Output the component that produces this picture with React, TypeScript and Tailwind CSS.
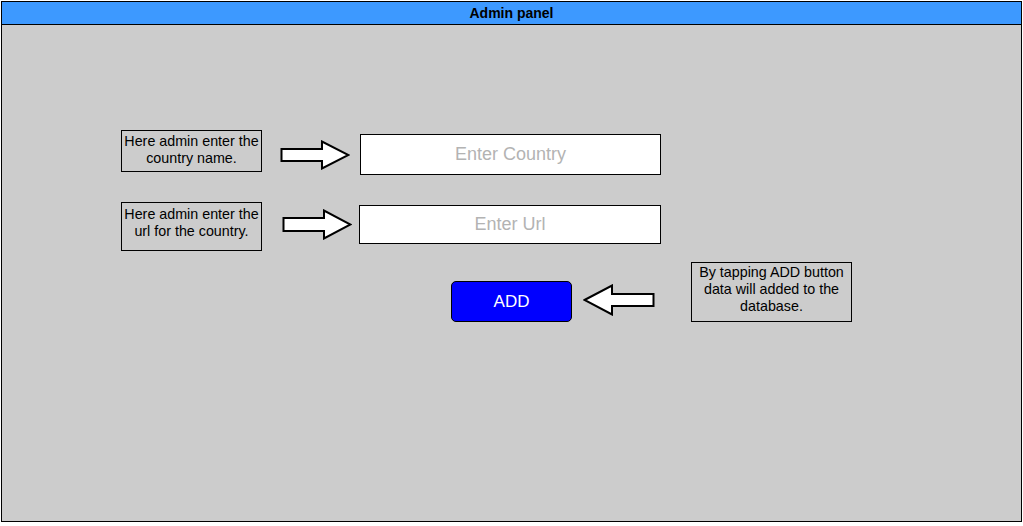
const RightArrow = ({ w, h }: { w: number; h: number }) => {
  const top = Math.round(h * 0.3);
  const bot = h - top;
  const head = w - 28;
  return (
    <svg width={w} height={h} viewBox={`0 0 ${w} ${h}`}>
      <path
        d={`M1.5 ${top} L${head} ${top} L${head} 1.5 L${w - 1.5} ${h / 2} L${head} ${h - 1.5} L${head} ${bot} L1.5 ${bot} Z`}
        fill="white"
        stroke="black"
        strokeWidth="2"
        strokeLinejoin="miter"
      />
    </svg>
  );
};

const LeftArrow = ({ w, h }: { w: number; h: number }) => {
  const top = Math.round(h * 0.32);
  const bot = h - top;
  return (
    <svg width={w} height={h} viewBox={`0 0 ${w} ${h}`}>
      <path
        d={`M1.5 ${h / 2} L29 1.5 L29 ${top} L${w - 1.5} ${top} L${w - 1.5} ${bot} L29 ${bot} L29 ${h - 1.5} Z`}
        fill="white"
        stroke="black"
        strokeWidth="2"
      />
    </svg>
  );
};

// notes are top aligned, padding given per note
const Note = ({ children, className }: { children: React.ReactNode; className: string }) => (
  <div
    className={
      "flex items-start justify-center border border-black bg-[#cccccc] text-center text-[14.3px] leading-[17px] text-black " +
      className
    }
  >
    {children}
  </div>
);

export default function App() {
  return (
    <div className="min-h-[526px] bg-white pl-px pt-px font-['Liberation_Sans',Arial,sans-serif]">
      <div className="flex h-[521px] w-[1021px] flex-col border border-black bg-[#cccccc]">
        <div className="flex h-[23px] shrink-0 items-center justify-center border-b border-black bg-[#3d99ff] text-[14px] font-bold text-black">
          Admin panel
        </div>

        <div className="flex items-start pt-[105px]">
          <Note className="ml-[119px] h-[42px] w-[141px] pt-[2px]">
            Here admin enter the
            <br />
            country name.
          </Note>
          <div className="ml-[18px] mt-[10px] flex">
            <RightArrow w={70} h={30} />
          </div>
          <div className="ml-[10px] mt-[4px] flex h-[41px] w-[301px] items-center justify-center border border-black bg-white text-[18px] text-[#b3b3b3]">
            Enter Country
          </div>
        </div>

        <div className="mt-[27px] flex items-start">
          <Note className="ml-[119px] h-[49px] w-[141px] pt-[3px]">
            Here admin enter the
            <br />
            url for the country.
          </Note>
          <div className="ml-[20px] mt-[7px] flex">
            <RightArrow w={70} h={31} />
          </div>
          <div className="ml-[7px] mt-[3px] flex h-[39px] w-[302px] items-center justify-center border border-black bg-white text-[18px] text-[#b3b3b3]">
            Enter Url
          </div>
        </div>

        <div className="mt-[11px] flex items-start">
          <button className="ml-[449px] mt-[19px] flex h-[41px] w-[121px] items-center justify-center rounded-[5px] border border-black bg-[#0000ff] text-[17px] text-white">
            ADD
          </button>
          <div className="ml-[11px] mt-[22px] flex">
            <LeftArrow w={72} h={32} />
          </div>
          <Note className="ml-[36px] h-[60px] w-[161px] pt-px">
            By tapping ADD button
            <br />
            data will added to the
            <br />
            database.
          </Note>
        </div>
      </div>
    </div>
  );
}
